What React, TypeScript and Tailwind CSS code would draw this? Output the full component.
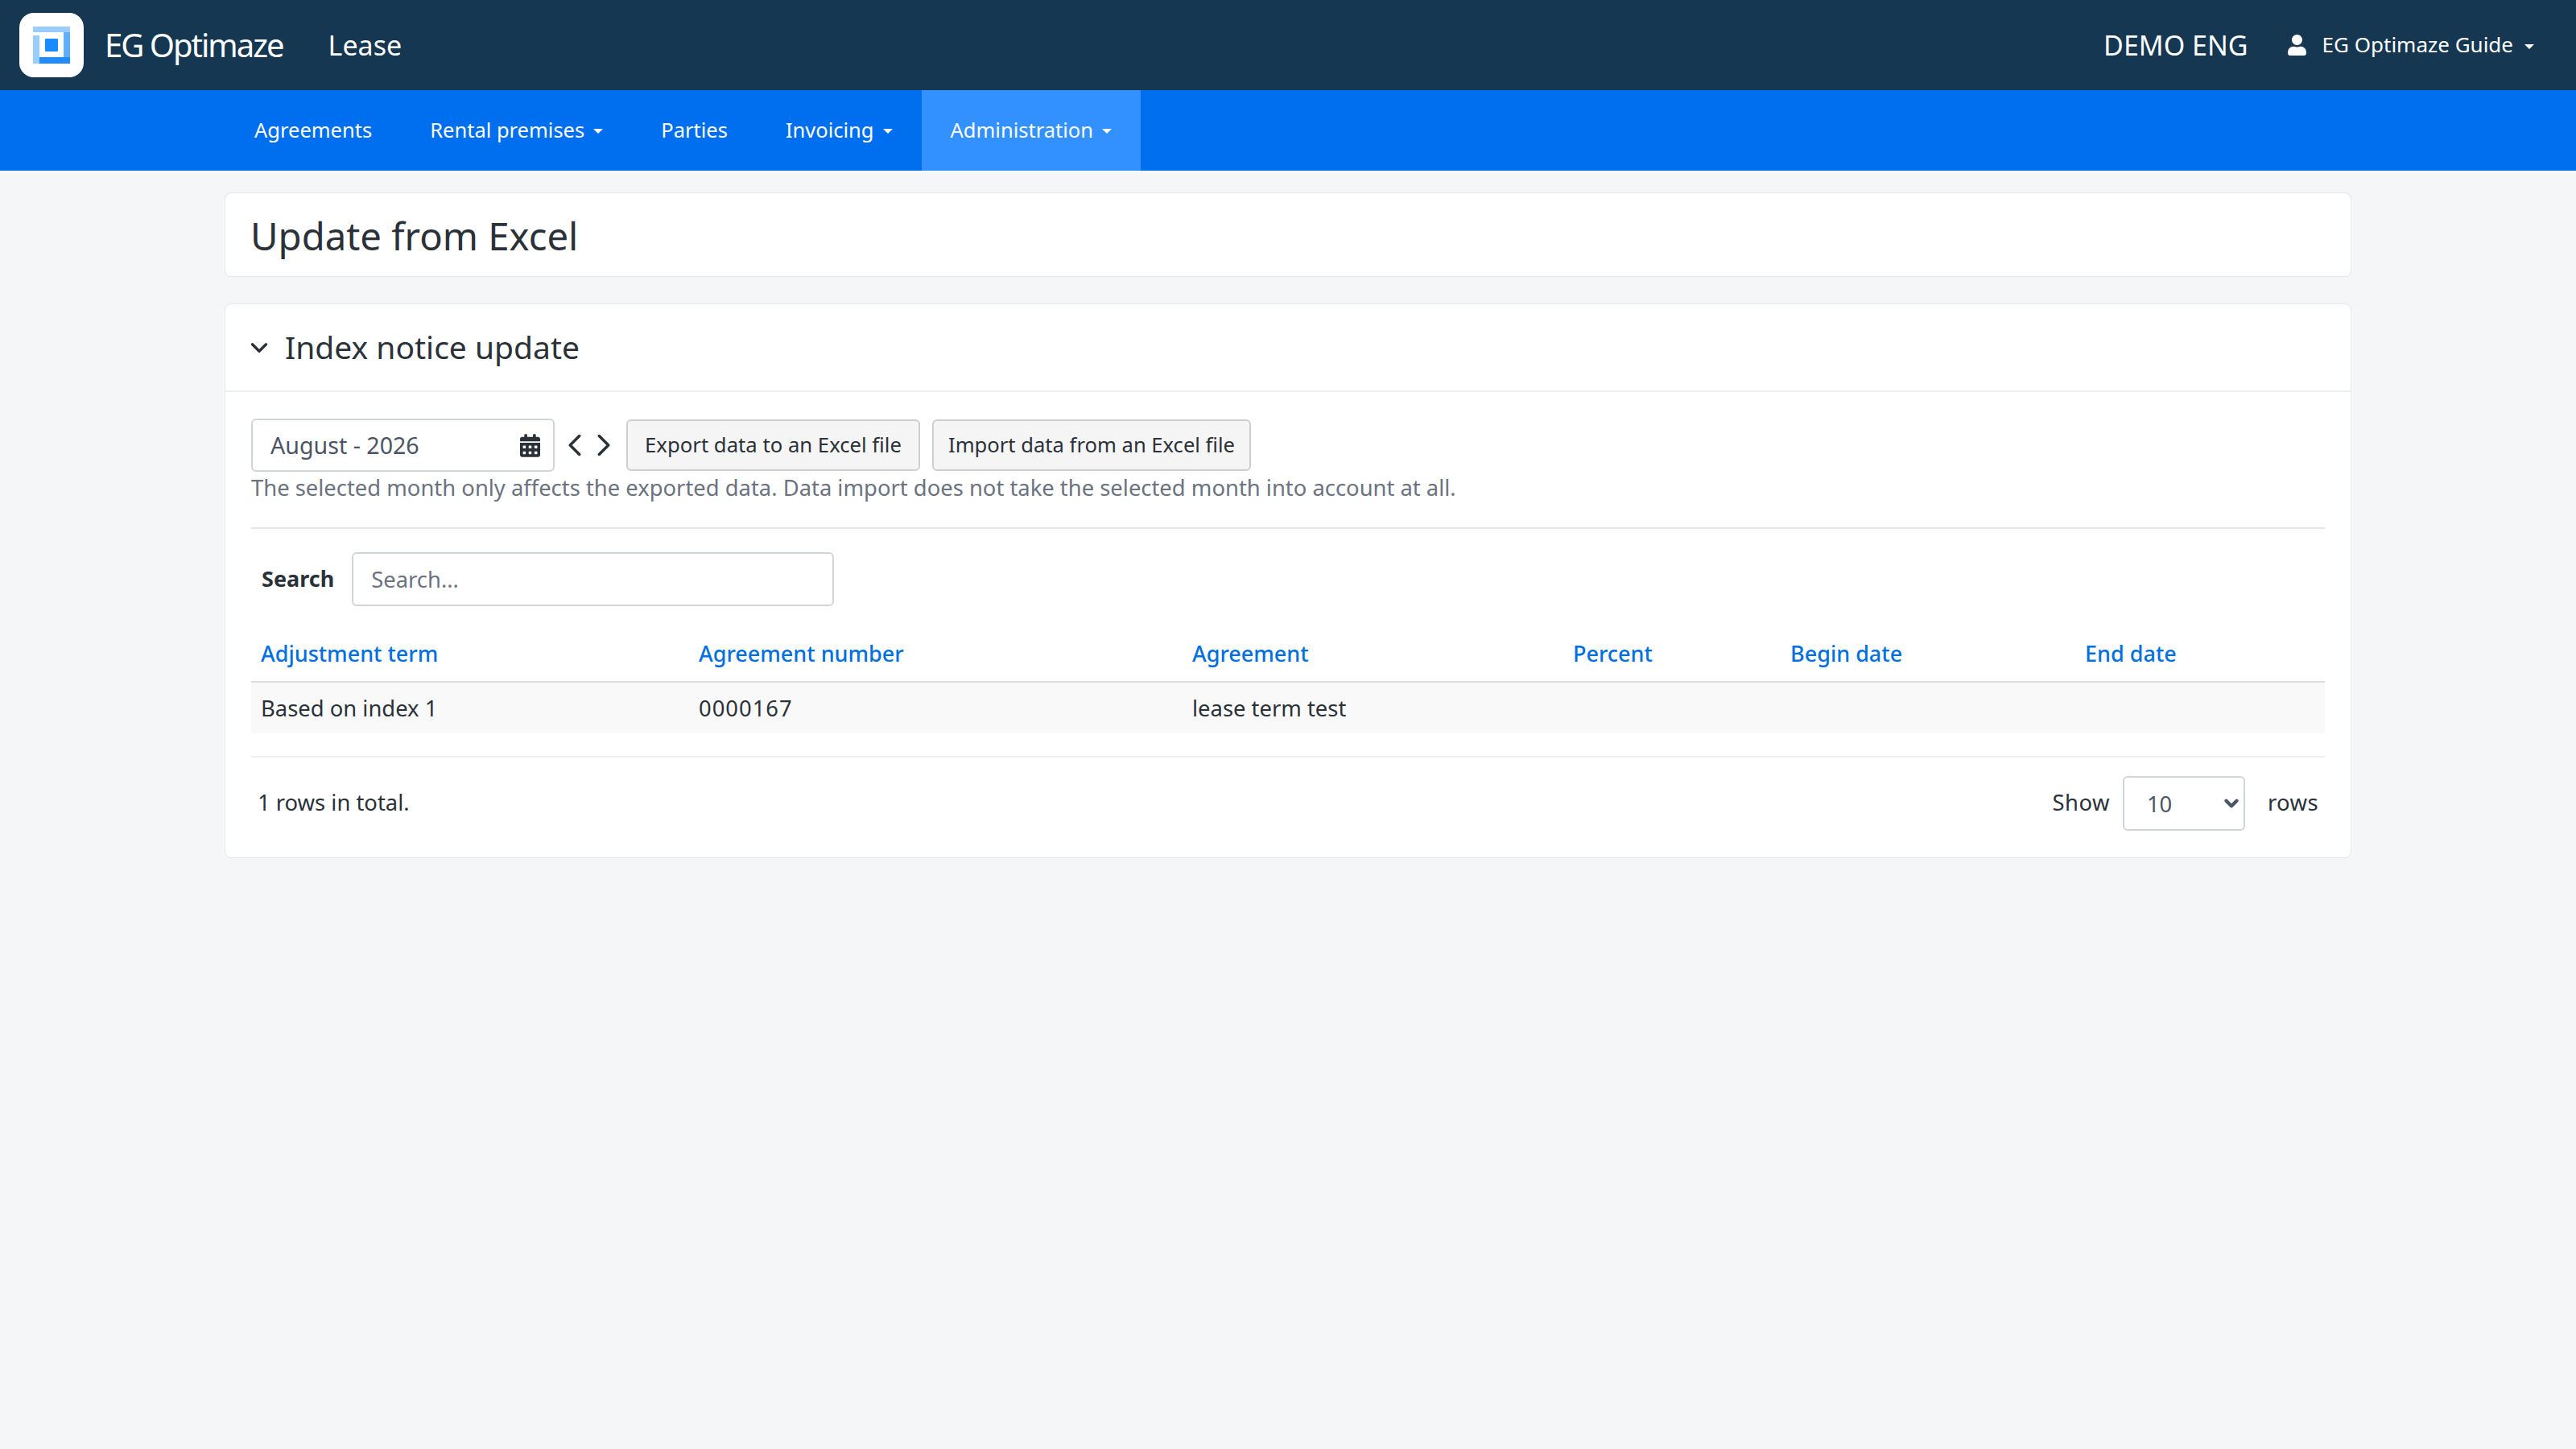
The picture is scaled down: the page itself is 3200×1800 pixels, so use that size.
import { ChevronDown, ChevronLeft, ChevronRight } from 'lucide-react';
import { FaCalendarAlt, FaUser } from 'react-icons/fa';

const navItems = [
  { label: 'Agreements', caret: false, active: false },
  { label: 'Rental premises', caret: true, active: false },
  { label: 'Parties', caret: false, active: false },
  { label: 'Invoicing', caret: true, active: false },
  { label: 'Administration', caret: true, active: true },
];

const columns = [
  { label: 'Adjustment term', width: 'w-[544px]', value: 'Based on index 1', cell: '' },
  { label: 'Agreement number', width: 'w-[613px]', value: '0000167', cell: 'tracking-[1px]' },
  { label: 'Agreement', width: 'w-[473px]', value: 'lease term test', cell: '' },
  { label: 'Percent', width: 'w-[270px]', value: '', cell: '' },
  { label: 'Begin date', width: 'w-[366px]', value: '', cell: '' },
  { label: 'End date', width: 'w-[310px]', value: '', cell: '' },
];

function Caret({ gap }: { gap: string }) {
  return (
    <svg width="12" height="6" viewBox="0 0 12 6" className={`${gap} mt-[3px]`}>
      <path d="M0 0h12L6 6z" fill="currentColor" />
    </svg>
  );
}

function Logo() {
  return (
    <div className="flex h-[80px] w-[80px] items-center justify-center rounded-[18px] bg-white">
      <svg width="46" height="46" viewBox="0 0 46 46">
        <rect x="0" y="0" width="46" height="7" fill="#99ccff" />
        <rect x="38" y="7" width="8" height="31" fill="#5cb0ff" />
        <rect x="8" y="38" width="38" height="8" fill="#1f8cff" />
        <rect x="0" y="11" width="8" height="35" fill="#99ccff" />
        <rect x="15" y="15" width="16" height="16" rx="1" fill="#1a8cff" />
      </svg>
    </div>
  );
}

export default function App() {
  return (
    <div className="min-h-[1800px] bg-[#f5f6f8] font-['Noto_Sans',sans-serif] text-[27.4px] text-[#2b3139]">
      <header className="flex h-[112px] items-center justify-between bg-[#153751] pl-[24px] pr-[52px] text-white">
        <div className="flex items-center">
          <Logo />
          <span className="ml-[26px] text-[40px] tracking-[-2px]">EG Optimaze</span>
          <span className="ml-[56px] text-[34px]">Lease</span>
        </div>
        <div className="flex items-center">
          <span className="text-[34px]">DEMO ENG</span>
          <FaUser className="ml-[49px] h-[26px] w-[23px]" />
          <span className="ml-[20px] pb-[2px] text-[26px]">EG Optimaze Guide</span>
          <Caret gap="ml-[14px]" />
        </div>
      </header>

      <nav className="flex h-[100px] bg-[#006fef] pl-[280px] text-[25.5px] text-white">
        {navItems.map((item) => (
          <div
            key={item.label}
            className={`flex items-center px-[36px] pb-[2px] ${item.active ? 'bg-[#3391ff]' : ''}`}
          >
            {item.label}
            {item.caret && <Caret gap="ml-[11px]" />}
          </div>
        ))}
      </nav>

      <main className="flex flex-col gap-[33px] px-[279px] pt-[27px]">
        <div className="flex h-[105px] items-center rounded-[8px] border border-[#e4e6ea] bg-white px-[31px] pt-[3px]">
          <h1 className="text-[47.3px] text-[#2b3139]">Update from Excel</h1>
        </div>

        <section className="rounded-[8px] border border-[#e4e6ea] bg-white">
          <div className="flex h-[109px] items-center border-b-2 border-[#efefef] px-[25px]">
            <ChevronDown className="h-[34px] w-[34px]" strokeWidth={2.4} />
            <h2 className="ml-[15px] text-[39px]">Index notice update</h2>
          </div>

          <div className="px-[32px] pt-[33px] pb-[10px]">
            <div className="flex items-center">
              <div className="flex h-[66px] w-[377px] items-center justify-between rounded-[6px] border-2 border-[#d1d5db] px-[22px] pr-[16px] text-[28.6px] text-[#4b5563]">
                <span>August - 2026</span>
                <FaCalendarAlt className="h-[29px] w-[25px] text-[#2b3139]" />
              </div>
              <ChevronLeft className="ml-[2px] h-[46px] w-[46px]" strokeWidth={1.8} />
              <ChevronRight className="-ml-[10px] h-[46px] w-[46px]" strokeWidth={1.8} />
              <button className="ml-[5px] h-[64px] w-[365px] rounded-[6px] border-2 border-[#cfcfcf] bg-[#f5f5f5] text-[25.7px]">
                Export data to an Excel file
              </button>
              <button className="ml-[15px] h-[64px] w-[396px] rounded-[6px] border-2 border-[#cfcfcf] bg-[#f5f5f5] text-[25.6px]">
                Import data from an Excel file
              </button>
            </div>
            <p className="-mt-[1px] text-[#6b7280]">
              The selected month only affects the exported data. Data import does not take the selected month into account at all.
            </p>

            <div className="mt-[29px] border-t-2 border-[#e5e7eb] pt-[29px]">
              <div className="flex items-center pl-[13px]">
                <label className="text-[27px] font-bold">Search</label>
                <input
                  placeholder="Search..."
                  className="ml-[22px] h-[67px] w-[599px] rounded-[6px] border-2 border-[#d1d5db] px-[22px] placeholder:text-[#6b7280]"
                />
              </div>
            </div>

            <table className="mt-[26px] w-[2576px] table-fixed border-collapse">
              <thead>
                <tr className="h-[68px] border-b-2 border-[#dedede]">
                  {columns.map((col) => (
                    <th key={col.label} className={`${col.width} px-[12px] text-left text-[27px] font-medium text-[#006fdf]`}>
                      {col.label}
                    </th>
                  ))}
                </tr>
              </thead>
              <tbody>
                <tr className="h-[64px] bg-[#f9f9f9]">
                  {columns.map((col) => (
                    <td key={col.label} className={`px-[12px] ${col.cell}`}>
                      {col.value}
                    </td>
                  ))}
                </tr>
              </tbody>
            </table>

            <div className="mt-[28px] flex h-[116px] items-center justify-between border-t-2 border-[#efefef] px-[8px]">
              <span className="pb-[3px]">1 rows in total.</span>
              <div className="flex items-center">
                <span className="pb-[3px] tracking-[0.5px]">Show</span>
                <div className="relative ml-[16px]">
                  <select className="block h-[68px] w-[152px] appearance-none rounded-[6px] border-2 border-[#d1d5db] bg-white pl-[28px] text-[#4b5563]">
                    <option>10</option>
                  </select>
                  <ChevronDown className="absolute right-[4px] top-[21px] h-[26px] w-[26px] text-[#4b5563]" strokeWidth={4} />
                </div>
                <span className="ml-[28px] pb-[3px] tracking-[0.4px]">rows</span>
              </div>
            </div>
          </div>
        </section>
      </main>
    </div>
  );
}
